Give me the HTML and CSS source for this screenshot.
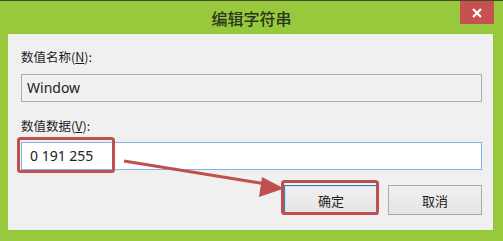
FILE: index.html
```html
<!DOCTYPE html>
<html lang="zh-CN">
<head>
<meta charset="utf-8">
<title>编辑字符串</title>
<link rel="stylesheet" href="styles.css">
</head>
<body>
<div class="dialog">
  <div class="titlebar">
    <span></span>
    <span class="title">编辑字符串</span>
    <button class="close" aria-label="关闭">
      <svg width="10" height="10" viewBox="0 0 10 10"><path d="M1 1 L9 9 M9 1 L1 9" stroke="#fff" stroke-width="2.2" fill="none"/></svg>
    </button>
  </div>
  <div class="content">
    <label class="label">数值名称(<u>N</u>):</label>
    <div class="field readonly">Window</div>
    <label class="label second">数值数据(<u>V</u>):</label>
    <div class="field focused">0 191 255</div>
    <div class="buttons">
      <button class="btn default">确定</button>
      <button class="btn">取消</button>
    </div>
  </div>
  <svg class="annot" width="503" height="241" viewBox="0 0 503 241">
    <rect x="18.5" y="138.5" width="95" height="33" rx="2" fill="none" stroke="#c0504d" stroke-width="3"/>
    <line x1="124" y1="161" x2="266" y2="184" stroke="#c0504d" stroke-width="3"/>
    <polygon points="284,188.5 262,177 259,197" fill="#c0504d"/>
    <rect x="282.5" y="181.5" width="95" height="32" rx="2" fill="none" stroke="#c0504d" stroke-width="3"/>
  </svg>
</div>
</body>
</html>
```
FILE: styles.css
```css
html, body {
  margin: 0;
  padding: 0;
  width: 503px;
  height: 241px;
  overflow: hidden;
  background: #98c93c;
}
.dialog {
  position: relative;
  width: 503px;
  height: 241px;
  box-sizing: border-box;
  background: #98c93c;
  border-top: 1px solid #3f4a2c;
  display: flex;
  flex-direction: column;
  font-family: "Noto Sans", "Noto Sans CJK SC", sans-serif;
}
.titlebar {
  height: 33px;
  display: grid;
  grid-template-columns: 1fr auto 1fr;
  align-items: start;
}
.title {
  font-family: "Noto Sans CJK SC", sans-serif;
  font-size: 16px;
  font-weight: 500;
  line-height: 34px;
  color: #2a3620;
}
.close {
  justify-self: end;
  margin-right: 9px;
  width: 34px;
  height: 23px;
  border: 0;
  padding: 0;
  background: #c75050;
  display: flex;
  align-items: center;
  justify-content: center;
}
.content {
  flex: 1;
  margin: 0 10px 11px 8px;
  background: #f0f0f0;
  padding: 15px 11px 0 13px;
  display: flex;
  flex-direction: column;
}
.label {
  font-family: "Noto Sans CJK SC", sans-serif;
  font-size: 12.5px;
  line-height: 16px;
  color: #1e1e1e;
}
.label u { text-decoration: underline; }
.label.second { margin-top: 16px; }
.field {
  margin-top: 9px;
  height: 28px;
  box-sizing: border-box;
  padding-left: 5px;
  font-size: 14px;
  line-height: 26px;
  color: #222;
}
.field.readonly {
  border: 1px solid #abadb3;
  background: #f0f0f0;
}
.field.focused {
  margin-top: 8px;
  border: 1px solid #7eb4ea;
  background: #fff;
  padding-left: 8px;
}
.buttons {
  margin-top: 15px;
  display: flex;
  justify-content: flex-end;
  gap: 10px;
}
.btn {
  width: 94px;
  height: 30px;
  box-sizing: border-box;
  border: 1px solid #acacac;
  background: linear-gradient(#f0f0f0, #e5e5e5);
  font-family: "Noto Sans CJK SC", sans-serif;
  font-size: 13px;
  color: #1e1e1e;
  padding: 0;
}
.btn.default {
  border: 1px solid #3c7fb1;
  box-shadow: inset 0 0 0 1px #cde3f6;
}
.annot {
  position: absolute;
  left: 0;
  top: -1px;
  pointer-events: none;
}
```
